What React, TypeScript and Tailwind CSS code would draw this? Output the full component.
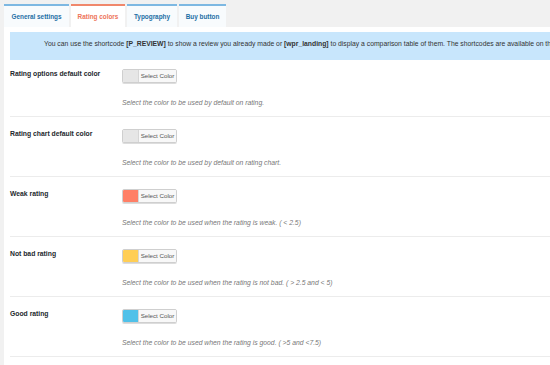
import React from 'react';

const tabs = [
  { label: 'General settings', w: 'w-[65px]', active: false },
  { label: 'Rating colors', w: 'w-[54px]', active: true },
  { label: 'Typography', w: 'w-[50px]', active: false },
  { label: 'Buy button', w: 'w-[47px]', active: false },
];

const rows = [
  { label: 'Rating options default color', color: '#e6e6e6', desc: 'Select the color to be used by default on rating.' },
  { label: 'Rating chart default color', color: '#e6e6e6', desc: 'Select the color to be used by default on rating chart.' },
  { label: 'Weak rating', color: '#ff7f66', desc: 'Select the color to be used when the rating is weak. ( < 2.5)' },
  { label: 'Not bad rating', color: '#ffce55', desc: 'Select the color to be used when the rating is not bad. ( > 2.5 and < 5)' },
  { label: 'Good rating', color: '#50c1e9', desc: 'Select the color to be used when the rating is good. ( >5 and <7.5)' },
];

export default function App() {
  return (
    <div className="w-[550px] h-[365px] overflow-hidden bg-[#f1f1f1] pl-[4px] pt-[4px] font-['Liberation_Sans',Arial,sans-serif]">
      {/* Tabs */}
      <div className="flex gap-[2px] h-[23px]">
        {tabs.map(t => (
          <div
            key={t.label}
            className={`${t.w} shrink-0 flex items-center justify-center border-t-2 text-[6.4px] font-bold ${
              t.active ? 'bg-white border-[#f0876b] text-[#ee7459]' : 'bg-[#f8fbfd] border-[#7db8e2] text-[#1d6fa5]'
            }`}
          >
            {t.label}
          </div>
        ))}
      </div>

      {/* Panel */}
      <div className="bg-white pl-[6px] pt-[5px] h-[400px]">
        <div className="bg-[#c8e6fc] h-[28px] pl-[34px] pt-[7px] text-[6.8px] text-[#333] whitespace-nowrap overflow-hidden">
          You can use the shortcode <b>[P_REVIEW]</b> to show a review you already made or <b>[wpr_landing]</b> to display a comparison table of them. The shortcodes are available on the
        </div>

        {rows.map((r, i) => (
          <div key={r.label} className={`flex border-b border-[#ececec] ${i === 0 ? 'h-[57px]' : 'h-[60px]'}`}>
            <div className={`w-[112px] shrink-0 text-[6.8px] font-bold text-[#23282d] ${i === 0 ? 'pt-[9px]' : 'pt-[12px]'}`}>
              {r.label}
            </div>
            <div className={`flex flex-col ${i === 0 ? 'pt-[9px]' : 'pt-[12px]'}`}>
              <div className="flex w-[55px] h-[14px] border border-[#cfcfcf] rounded-[2px] overflow-hidden shadow-[0_1px_0_#ddd]">
                <div className="w-[15px] h-full" style={{ background: r.color }} />
                <div className="flex-1 bg-[#f8f8f8] border-l border-[#d6d6d6] flex items-center justify-center text-[6.2px] text-[#555]">
                  Select Color
                </div>
              </div>
              <div className="mt-[15px] text-[6.8px] italic text-[#777] whitespace-nowrap">{r.desc}</div>
            </div>
          </div>
        ))}
      </div>
    </div>
  );
}
